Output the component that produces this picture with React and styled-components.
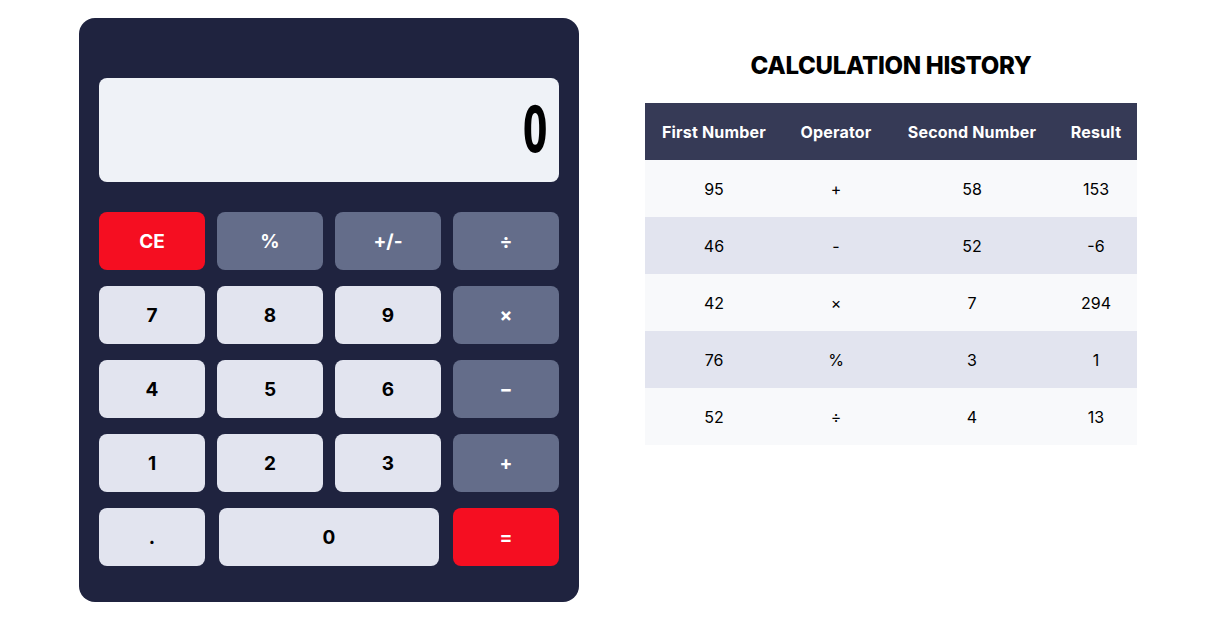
import React from 'react';
import styled, { createGlobalStyle } from 'styled-components';

const colors = {
  body: '#1f233f',
  screen: '#eff2f7',
  key: '#e2e4ef',
  op: '#646d8a',
  red: '#f50e21',
  head: '#363a56',
  rowLight: '#f8f9fb',
  rowDark: '#e2e4ef',
};

const GlobalStyle = createGlobalStyle`
  * { box-sizing: border-box; }
  body {
    margin: 0;
    background: #ffffff;
    font-family: Inter, "Open Sans", sans-serif;
  }
`;

const Page = styled.div`
  display: flex;
  justify-content: center;
  align-items: flex-start;
  gap: 66px;
  padding: 18px 4px 0 0;
`;

const Calculator = styled.div`
  width: 500px;
  height: 584px;
  background: ${colors.body};
  border-radius: 16px;
  padding: 60px 20px 36px;
  display: flex;
  flex-direction: column;
  gap: 30px;
`;

const Screen = styled.div`
  height: 104px;
  background: ${colors.screen};
  border-radius: 8px;
  display: flex;
  align-items: center;
  justify-content: flex-end;
  padding-right: 11px;
`;

const ScreenValue = styled.span`
  font-family: "DejaVu Sans Condensed", "DejaVu Sans", sans-serif;
  font-weight: 700;
  font-size: 44px;
  line-height: 1;
  color: #000;
  transform: scale(0.9, 1.45);
  transform-origin: right center;
`;

const Keys = styled.div`
  display: grid;
  grid-template-columns: repeat(4, 1fr);
  grid-auto-rows: 58px;
  column-gap: 12px;
  row-gap: 16px;
`;

const Key = styled.button`
  height: 58px;
  border: none;
  border-radius: 8px;
  font-family: Inter, "Open Sans", sans-serif;
  font-weight: 700;
  font-size: 19px;
  cursor: pointer;
  background: ${p =>
    p.$kind === 'red' ? colors.red : p.$kind === 'op' ? colors.op : colors.key};
  color: ${p => (p.$kind === 'num' ? '#000' : '#fff')};
  ${p => (p.$wide ? 'grid-column: span 2; margin: 0 2px;' : '')}
`;

const History = styled.div`
  width: 492px;
  display: flex;
  flex-direction: column;
  align-items: center;
  padding-top: 33px;
`;

const Title = styled.h2`
  margin: 0 0 22px;
  font-family: Inter, "Open Sans", sans-serif;
  font-weight: 800;
  font-size: 24px;
  letter-spacing: -0.3px;
  line-height: 30px;
  color: #000;
`;

const Table = styled.table`
  width: 492px;
  border-collapse: collapse;
  table-layout: fixed;
`;

const HeadCell = styled.th`
  height: 57px;
  background: ${colors.head};
  color: #fff;
  font-weight: 700;
  font-size: 16px;
  letter-spacing: 0.2px;
  text-align: center;
  padding: 0;
`;

const Row = styled.tr`
  background: ${p => (p.$even ? colors.rowDark : colors.rowLight)};
`;

const Cell = styled.td`
  height: 57px;
  text-align: center;
  font-size: 16px;
  color: #000;
  padding: 0;
`;

const keys = [
  { label: 'CE', kind: 'red' },
  { label: '%', kind: 'op' },
  { label: '+/-', kind: 'op' },
  { label: '÷', kind: 'op' },
  { label: '7', kind: 'num' },
  { label: '8', kind: 'num' },
  { label: '9', kind: 'num' },
  { label: '×', kind: 'op' },
  { label: '4', kind: 'num' },
  { label: '5', kind: 'num' },
  { label: '6', kind: 'num' },
  { label: '−', kind: 'op' },
  { label: '1', kind: 'num' },
  { label: '2', kind: 'num' },
  { label: '3', kind: 'num' },
  { label: '+', kind: 'op' },
  { label: '.', kind: 'num' },
  { label: '0', kind: 'num', wide: true },
  { label: '=', kind: 'red' },
];

const history = [
  ['95', '+', '58', '153'],
  ['46', '-', '52', '-6'],
  ['42', '×', '7', '294'],
  ['76', '%', '3', '1'],
  ['52', '÷', '4', '13'],
];

export default function App() {
  return (
    <>
      <GlobalStyle />
      <Page>
        <Calculator>
          <Screen>
            <ScreenValue>0</ScreenValue>
          </Screen>
          <Keys>
            {keys.map(k => (
              <Key key={k.label} $kind={k.kind} $wide={k.wide}>
                {k.label}
              </Key>
            ))}
          </Keys>
        </Calculator>
        <History>
          <Title>CALCULATION HISTORY</Title>
          <Table>
            <colgroup>
              <col style={{ width: 138 }} />
              <col style={{ width: 106 }} />
              <col style={{ width: 166 }} />
              <col style={{ width: 82 }} />
            </colgroup>
            <thead>
              <tr>
                <HeadCell>First Number</HeadCell>
                <HeadCell>Operator</HeadCell>
                <HeadCell>Second Number</HeadCell>
                <HeadCell>Result</HeadCell>
              </tr>
            </thead>
            <tbody>
              {history.map((r, i) => (
                <Row key={i} $even={i % 2 === 1}>
                  {r.map((c, j) => (
                    <Cell key={j}>{c}</Cell>
                  ))}
                </Row>
              ))}
            </tbody>
          </Table>
        </History>
      </Page>
    </>
  );
}
